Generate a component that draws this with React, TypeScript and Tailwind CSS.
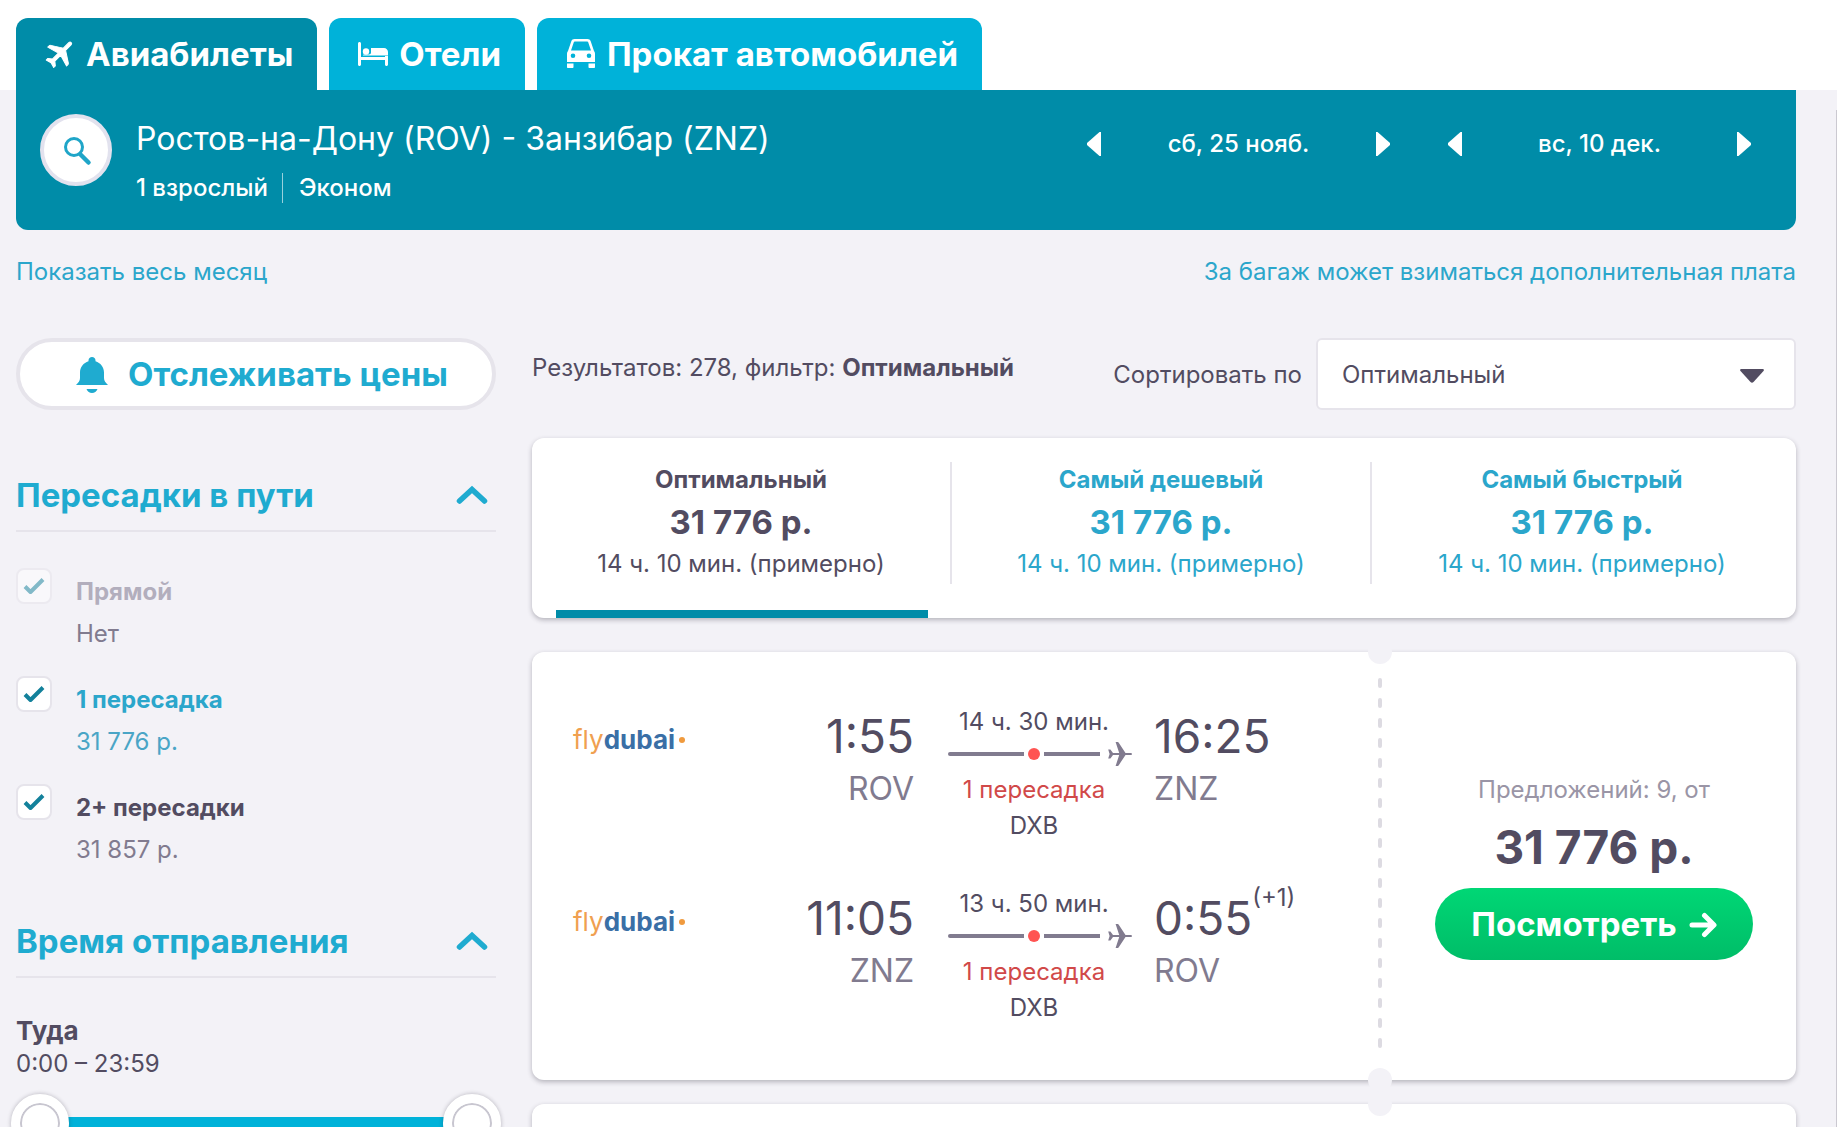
import { useState } from "react";

interface Leg {
    depart: string;
    from: string;
    duration: string;
    arrive: string;
    to: string;
    plusDays?: string;
}

const legs: Leg[] = [
    { depart: "1:55", from: "ROV", duration: "14 ч. 30 мин.", arrive: "16:25", to: "ZNZ" },
    { depart: "11:05", from: "ZNZ", duration: "13 ч. 50 мин.", arrive: "0:55", to: "ROV", plusDays: "(+1)" },
];

const sortTabs = ["Оптимальный", "Самый дешевый", "Самый быстрый"];

function PlaneIcon({ className }: { className?: string }) {
    return (
        <svg className={className} viewBox="0 0 24 24" fill="currentColor" aria-hidden="true">
            <path d="M24 12c0-.7-.6-1.1-1.4-1.1h-5.1L10.6.6C10.2.1 9.6 0 9 0H7.6l3.6 10.9H5L2.4 7.4H.2L1.6 12 .2 16.6h2.2L5 13.1h6.2L7.6 24H9c.6 0 1.2-.1 1.6-.6l6.9-10.3h5.1c.8 0 1.4-.4 1.4-1.1z" />
        </svg>
    );
}

// Same plane with a heavier body, climbing to the top right
function FlightTabIcon() {
    return (
        <svg className="w-8 h-8" viewBox="0 0 32 32" fill="currentColor" stroke="currentColor" strokeWidth="1" strokeLinejoin="round" aria-hidden="true">
            <g transform="rotate(-45 16 16) translate(1 3)">
                <path d="M31 12.800c0-1-.8-1.600-1.800-1.600h-7.700L14.500.3C14.100-.3 13.500-.5 12.800-.5h-1.600l3.300 11.700H6.300L3.300 7.500H1l1.500 5.300L1 18.100h2.300l3-3.700h8.200l-3.300 11.700h1.600c.7 0 1.300-.2 1.700-.8l7-10.900h7.700c1 0 1.800-.6 1.800-1.600z" />
            </g>
        </svg>
    );
}

function BedIcon() {
    return (
        <svg className="w-8 h-8" viewBox="0 0 32 32" fill="currentColor" aria-hidden="true">
            <path d="M1 5.500C1 4.700 1.700 4 2.500 4S4 4.700 4 5.500V19h24v-1h3v8.500c0 .8-.7 1.500-1.500 1.500S28 27.300 28 26.500V22H4v4.500c0 .8-.7 1.500-1.500 1.500S1 27.300 1 26.500z" />
            <circle cx="9" cy="13.500" r="3.200" />
            <path d="M14 10h13c2.200 0 4 1.800 4 4v3.500H6c0-.6.300-1 1-1h5c1.200 0 2-.8 2-2z" />
        </svg>
    );
}

function CarIcon() {
    return (
        <svg className="w-8 h-8" viewBox="0 0 32 32" fill="currentColor" aria-hidden="true">
            <path
                fillRule="evenodd"
                d="M9.500 1h13c1.500 0 2.700.8 3.200 2.200L29 13c.7.900 1 1.700 1 2.800V24H2v-8.200c0-1.100.3-1.900 1-2.800l3.300-9.800C6.800 1.800 8 1 9.500 1zm.3 2.500c-.5 0-.8.200-1 .7L6 12.500h20l-2.800-8.300c-.2-.5-.5-.7-1-.7zM8 15.500a2.300 2.300 0 1 0 0 4.600 2.300 2.300 0 0 0 0-4.600zm16 0a2.300 2.300 0 1 0 0 4.600 2.300 2.300 0 0 0 0-4.600z"
            />
            <path d="M2 25.500h6.500V29c0 .6-.4 1-1 1H3c-.6 0-1-.4-1-1zM23.500 25.500H30V29c0 .6-.4 1-1 1h-4.500c-.6 0-1-.4-1-1z" />
        </svg>
    );
}

function BellIcon() {
    return (
        <svg className="w-8 h-9" viewBox="0 0 32 36" fill="currentColor" aria-hidden="true">
            <path d="M16 0c2 0 3.500 1.500 3.500 3.400v.8c5 1.500 8.500 6 8.500 11.300v5.500c0 3 1.600 4.700 4 7H0c2.400-2.300 4-4 4-7v-5.500C4 10.200 7.500 5.700 12.500 4.200v-.8C12.500 1.500 14 0 16 0zM10.500 32h11c-1 2.500-3 4-5.500 4s-4.500-1.500-5.500-4z" />
        </svg>
    );
}

function Chevron() {
    return (
        <svg className="w-8 h-5" viewBox="0 0 32 20" fill="none" stroke="currentColor" strokeWidth="5.500" strokeLinecap="round" aria-hidden="true">
            <path d="M3.500 16 16 4.500 28.500 16" />
        </svg>
    );
}

function DateNav({ label }: { label: string }) {
    return (
        <div className="w-[305px] flex items-center justify-between text-2xl font-medium">
            <button aria-label="Предыдущий день">
                <svg className="w-4 h-6" viewBox="0 0 16 24" fill="currentColor"><path d="M15 0v24h-1.500L1 13V11L13.500 0z" /></svg>
            </button>
            <span>{label}</span>
            <button aria-label="Следующий день">
                <svg className="w-4 h-6" viewBox="0 0 16 24" fill="currentColor"><path d="M1 0v24h1.500L15 13V11L2.500 0z" /></svg>
            </button>
        </div>
    );
}

interface StopFilterProps {
    id: string;
    title: string;
    price: string;
    titleClass: string;
    priceClass: string;
    disabled?: boolean;
}

function StopFilter({ id, title, price, titleClass, priceClass, disabled }: StopFilterProps) {
    const [checked, setChecked] = useState(true);
    return (
        <div className="flex items-start gap-6 h-[108px]">
            <div className={`relative w-9 h-9 shrink-0 ${disabled ? "opacity-50" : ""}`}>
                <input
                    id={id}
                    type="checkbox"
                    checked={checked}
                    disabled={disabled}
                    onChange={(e) => setChecked(e.target.checked)}
                    className="appearance-none block w-9 h-9 rounded-lg bg-white border-2 border-[#e6e4eb]"
                />
                {checked && (
                    <svg className="absolute inset-0 w-9 h-9 pointer-events-none" viewBox="0 0 36 36" fill="none" stroke="#13819b" strokeWidth="4">
                        <path d="M9 18.500 14.500 24 27 11.500" strokeLinejoin="round" />
                    </svg>
                )}
            </div>
            <label htmlFor={id} className="block pt-[3px] text-2xl leading-[42px]">
                <span className={`block font-bold ${titleClass}`}>{title}</span>
                <span className={`block ${priceClass}`}>{price}</span>
            </label>
        </div>
    );
}

function SectionTitle({ children }: { children: string }) {
    return (
        <h2 className="border-b-2 border-[#e6e4eb] pb-2.5">
            <button className="w-full flex items-center justify-between pr-2 text-[33px] leading-[50px] font-bold text-[#1fabd0]">
                {children}
                <Chevron />
            </button>
        </h2>
    );
}

function FlightLeg({ leg }: { leg: Leg }) {
    return (
        <div className="flex h-[182px]">
            <div className="flex-1 pt-5 pl-px text-[26px] leading-10">
                <span className="text-[#f0a050]">fly</span>
                <span className="font-bold text-[#3a6fa6]">dubai</span>
                <span className="inline-block w-1.5 h-1.5 ml-1 mb-1.5 rounded-full bg-[#f09a3e]" />
            </div>
            <div className="text-right pt-2">
                <div className="text-[46px] leading-14">{leg.depart}</div>
                <div className="text-[32px] leading-[50px] text-[#817b8f]">{leg.from}</div>
            </div>
            <div className="w-[240px] flex flex-col items-center text-2xl leading-9 pt-1">
                <div>{leg.duration}</div>
                <div className="flex items-center gap-1 h-7 pl-3 text-[#817b8f]">
                    <div className="w-[76px] h-1 rounded-l-full bg-current" />
                    <div className="w-3 h-3 rounded-full bg-[#ff5452]" />
                    <div className="w-14 h-1 mr-1 bg-current" />
                    <PlaneIcon className="w-6 h-6" />
                </div>
                <div className="pt-1 text-[#d14949]">1 пересадка</div>
                <div>DXB</div>
            </div>
            <div className="w-[214px] pt-2">
                <div className="flex items-start text-[46px] leading-14">
                    {leg.arrive}
                    {leg.plusDays && <sup className="top-0 text-2xl leading-4">{leg.plusDays}</sup>}
                </div>
                <div className="text-[32px] leading-[50px] text-[#817b8f]">{leg.to}</div>
            </div>
        </div>
    );
}

function Notches() {
    return (
        <>
            <div className="absolute left-0 -top-3 w-6 h-6 rounded-full bg-[#f3f2f7]" />
            <div className="absolute left-0 -bottom-3 w-6 h-6 rounded-full bg-[#f3f2f7]" />
        </>
    );
}

function Ticket() {
    return (
        <article className="flex rounded-xl bg-white shadow-[0_2px_5px_rgba(37,32,51,0.3)]">
            <div className="flex-1 pt-12 pb-4 pl-10">
                {legs.map((leg) => (
                    <FlightLeg key={leg.depart} leg={leg} />
                ))}
            </div>
            <div className="relative w-6 flex justify-center py-6">
                <svg className="w-1 h-full" aria-hidden="true">
                    <line x1="2" y1="4" x2="2" y2="100%" stroke="#dddbe2" strokeWidth="4" strokeLinecap="round" strokeDasharray="6 14" />
                </svg>
                <Notches />
            </div>
            <div className="w-[404px] flex flex-col items-center justify-center">
                <div className="text-2xl leading-10 text-[#9a95a6]">Предложений: 9, от</div>
                <div className="text-[46px] leading-[74px] font-bold">31 776 р.</div>
                <button className="mt-1 mb-0.5 h-[72px] w-[318px] rounded-full flex items-center justify-center gap-3 pt-0.5 text-[33px] font-bold text-white bg-linear-to-b from-[#00d775] to-[#00bd68]">
                    Посмотреть
                    <svg className="w-7 h-7" viewBox="0 0 28 28" fill="none" stroke="currentColor" strokeWidth="5" strokeLinecap="round" strokeLinejoin="round" aria-hidden="true">
                        <path d="M3 14h20M15.500 4.500 25 14l-9.500 9.500" />
                    </svg>
                </button>
            </div>
        </article>
    );
}

// Blank ticket shown while the next results load
function TicketPlaceholder() {
    return (
        <div className="flex justify-end h-[428px] pr-[404px] rounded-xl bg-white shadow-[0_2px_5px_rgba(37,32,51,0.3)]">
            <div className="relative w-6">
                <Notches />
            </div>
        </div>
    );
}

function TimeSlider() {
    const [range, setRange] = useState([0, 1439]);
    const thumb =
        "absolute inset-0 w-full h-[58px] appearance-none bg-transparent pointer-events-none [&::-webkit-slider-thumb]:appearance-none [&::-webkit-slider-thumb]:pointer-events-auto [&::-webkit-slider-thumb]:w-[58px] [&::-webkit-slider-thumb]:h-[58px] [&::-webkit-slider-thumb]:rounded-full [&::-webkit-slider-thumb]:bg-white [&::-webkit-slider-thumb]:border-9 [&::-webkit-slider-thumb]:border-white [&::-webkit-slider-thumb]:shadow-[inset_0_0_0_2px_#c8c6d0,0_0_4px_rgba(37,32,51,0.3)]";
    return (
        <div className="relative h-[58px] -mx-[5px] flex items-center px-8">
            <div className="w-full h-3 bg-[#00b2d9]" />
            <input className={thumb} type="range" aria-label="Не раньше" min={0} max={1439} value={range[0]} onChange={(e) => setRange([Number(e.target.value), range[1]])} />
            <input className={thumb} type="range" aria-label="Не позже" min={0} max={1439} value={range[1]} onChange={(e) => setRange([range[0], Number(e.target.value)])} />
        </div>
    );
}

export default function App() {
    const [activeSort, setActiveSort] = useState(0);

    return (
        <div className="relative h-screen overflow-hidden bg-[#f3f2f7] font-['Inter','Open_Sans',sans-serif] text-[#524c61]">
            {/* Product tabs */}
            <nav className="bg-white pt-[18px] pl-4 flex gap-3 text-[33px] leading-[72px] font-bold text-white">
                <a href="#flights" className="flex items-center gap-2.5 pl-7 pr-6 rounded-t-xl bg-[#008ca8]">
                    <FlightTabIcon />
                    Авиабилеты
                </a>
                <a href="#hotels" className="flex items-center gap-2.5 pl-7 pr-6 rounded-t-xl bg-[#00b2d9]">
                    <BedIcon />
                    Отели
                </a>
                <a href="#cars" className="flex items-center gap-2.5 pl-7 pr-6 rounded-t-xl bg-[#00b2d9]">
                    <CarIcon />
                    Прокат автомобилей
                </a>
            </nav>

            <div className="pl-4 pr-[41px]">
                {/* Search summary */}
                <header className="flex h-[140px] pt-6 pl-6 pr-11 rounded-b-xl bg-[#008ca8] text-white">
                    <button aria-label="Изменить поиск" className="w-[72px] h-[72px] rounded-full bg-white border-4 border-[#e2e2ee] flex items-center justify-center">
                        <svg className="w-8 h-8" viewBox="0 0 32 32" fill="none" stroke="#1fa5c8" strokeLinecap="round">
                            <circle cx="14" cy="13" r="8.500" strokeWidth="3" />
                            <path d="m20.500 20.500 8 8" strokeWidth="4.500" />
                        </svg>
                    </button>
                    <div className="flex-1 pl-6">
                        <h1 className="text-[32px] leading-[50px]">Ростов-на-Дону (ROV) - Занзибар (ZNZ)</h1>
                        <p className="flex items-center h-12 text-2xl font-medium">
                            <span>1 взрослый</span>
                            <span className="w-px h-[30px] ml-3.5 mr-4 bg-white/60" />
                            <span>Эконом</span>
                        </p>
                    </div>
                    <div className="flex h-15 items-center gap-14">
                        <DateNav label="сб, 25 нояб." />
                        <DateNav label="вс, 10 дек." />
                    </div>
                </header>

                <div className="flex justify-between pt-6 text-2xl leading-9 text-[#2ba6cb]">
                    <a href="#month">Показать весь месяц</a>
                    <a href="#baggage">За багаж может взиматься дополнительная плата</a>
                </div>

                <div className="flex gap-9 pt-12">
                    {/* Filters */}
                    <aside className="w-[480px] shrink-0">
                        <button className="w-full h-[72px] rounded-full bg-white border-4 border-[#e6e4eb] flex items-center justify-center gap-5 pl-3 pt-0.5 text-[33px] font-bold text-[#1fabd0]">
                            <BellIcon />
                            Отслеживать цены
                        </button>

                        <section className="pt-[60px]">
                            <SectionTitle>Пересадки в пути</SectionTitle>
                            <div className="pt-9">
                                <StopFilter id="direct" title="Прямой" price="Нет" titleClass="text-[#b2aebd]" priceClass="text-[#817b8f]" disabled />
                                <StopFilter id="one-stop" title="1 пересадка" price="31 776 р." titleClass="text-[#2ba6cb]" priceClass="text-[#4aa5c6]" />
                                <StopFilter id="two-stops" title="2+ пересадки" price="31 857 р." titleClass="text-[#524c61]" priceClass="text-[#817b8f]" />
                            </div>
                        </section>

                        <section className="pt-6">
                            <SectionTitle>Время отправления</SectionTitle>
                            <div className="pt-9 text-2xl leading-8">
                                <h3 className="text-[26px] leading-[34px] font-bold">Туда</h3>
                                <p>0:00 – 23:59</p>
                            </div>
                            <div className="pt-3.5">
                                <TimeSlider />
                            </div>
                        </section>
                    </aside>

                    {/* Results */}
                    <main className="flex-1">
                        <div className="flex h-[72px] items-center text-2xl">
                            <p className="flex-1 pb-3">
                                Результатов: 278, фильтр: <b>Оптимальный</b>
                            </p>
                            <label htmlFor="sort" className="pt-0.5 pr-3.5">Сортировать по</label>
                            <div className="relative w-[480px]">
                                <select id="sort" className="appearance-none w-full h-[72px] pl-6 pt-0.5 rounded-md bg-white border-2 border-[#e6e4eb]">
                                    <option>Оптимальный</option>
                                    <option>Цена</option>
                                </select>
                                <svg className="absolute right-8 top-[31px] w-6 h-3.5 pointer-events-none" viewBox="0 0 24 14" fill="currentColor">
                                    <path d="M1.500 0h21c1.200 0 1.900 1 1 2L13.500 13c-.9.900-2.100.9-3 0L.5 2C-.4 1 .3 0 1.500 0z" />
                                </svg>
                            </div>
                        </div>

                        <div className="grid grid-cols-3 mt-7 h-[180px] pr-1 rounded-xl bg-white shadow-[0_2px_5px_rgba(37,32,51,0.3)]">
                            {sortTabs.map((tab, i) => (
                                <button
                                    key={tab}
                                    onClick={() => setActiveSort(i)}
                                    className={`relative flex flex-col pt-6 ${i === activeSort ? "" : "text-[#2ba6cb]"}`}
                                >
                                    <span className={`w-full h-[122px] flex flex-col items-center ${i < 2 ? "border-r-2 border-[#e6e4eb]" : ""}`}>
                                        <span className="text-2xl leading-9 font-bold">{tab}</span>
                                        <span className="text-[33px] leading-12 font-bold">31 776 р.</span>
                                        <span className="text-2xl leading-9">14 ч. 10 мин. (примерно)</span>
                                    </span>
                                    {i === activeSort && <span className="absolute left-6 right-6 bottom-0 h-2 bg-[#008ca8]" />}
                                </button>
                            ))}
                        </div>

                        <div className="flex flex-col gap-6 pt-[34px]">
                            <Ticket />
                            <TicketPlaceholder />
                        </div>
                    </main>
                </div>
            </div>

            {/* Edge of the page scroll area */}
            <div className="absolute right-0 top-[110px] bottom-0 w-px bg-[#cbc9d1]" />
        </div>
    );
}
